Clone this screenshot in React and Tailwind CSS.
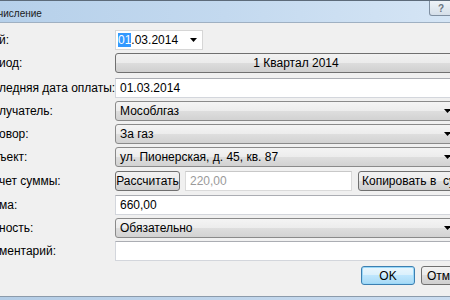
import React from "react";

const font = { fontFamily: '"Liberation Sans", Arial, sans-serif' };

function Arrow({ className = "" }) {
  return (
    <svg width="7" height="4" viewBox="0 0 7 4" className={className}>
      <path d="M0 0h7L3.5 4z" fill="#000" />
    </svg>
  );
}

function Label({ children }) {
  return (
    <div className="w-[115px] shrink-0 overflow-hidden whitespace-nowrap text-[12px] text-black">
      <span className="ml-[-1px]">{children}</span>
    </div>
  );
}

function Combo({ text }) {
  return (
    <div className="flex h-full w-[340px] shrink-0 items-center justify-between rounded-[3px] border border-[#8a8a8a] bg-[linear-gradient(to_bottom,#f4f4f4_0%,#ececec_50%,#dedede_50%,#d2d2d2_100%)] pl-[4px] pr-[3px] text-[12px]">
      <span className="whitespace-nowrap">{text}</span>
      <Arrow />
    </div>
  );
}

function TextBox({ text, className = "w-[360px]", muted }) {
  return (
    <div
      className={`flex h-full shrink-0 items-center whitespace-nowrap border border-[#d3d6dc] border-t-[#abadb3] bg-white px-[4px] text-[12px] ${className} ${
        muted ? "text-[#9a9a9a]" : "text-black"
      }`}
    >
      {text}
    </div>
  );
}

function Button({ children, className = "" }) {
  return (
    <div
      className={`flex h-full shrink-0 items-center whitespace-nowrap rounded-[3px] border border-[#707070] bg-[linear-gradient(to_bottom,#f2f2f2_0%,#ebebeb_50%,#dddddd_50%,#cfcfcf_100%)] text-[12px] ${className}`}
    >
      {children}
    </div>
  );
}

export default function App() {
  return (
    <div className="relative flex h-[300px] w-[450px] flex-col overflow-hidden bg-[#f0f0f0]" style={font}>
      {/* Title bar */}
      <div className="relative h-[22px] shrink-0 border-t border-[#5d6b7a] bg-[linear-gradient(to_right,#b6d0ea_0%,#c3d9ef_50%,#d5e5f5_100%)]">
        <span className="absolute left-[-2px] top-[5px] text-[10px] text-[#1a1a1a]">числение</span>
        <div className="absolute right-[-3px] top-0 flex h-[15px] w-[24px] items-center justify-center rounded-b-[3px] border border-t-0 border-[#7f8fa1] bg-[linear-gradient(to_bottom,#eef3f8,#d5dfe9)] text-[10px] font-bold text-[#6b7580]">
          ?
        </div>
      </div>
      <div className="h-px shrink-0 bg-[#9fb0c2]" />

      {/* Body */}
      <div className="flex flex-1 flex-col">
        <div className="mt-[7px] flex h-[20px] items-center">
          <Label>й:</Label>
          <div className="flex h-full w-[88px] items-center justify-between border border-[#d6d6d6] bg-white pl-[2px] pr-[5px] text-[12px]">
            <span>
              <span className="bg-[#3399ff] text-white">01</span>.03.2014
            </span>
            <Arrow />
          </div>
        </div>

        <div className="mt-[3px] flex h-[20px] items-center">
          <Label>иод:</Label>
          <Button className="w-[362px] justify-center">1 Квартал 2014</Button>
        </div>

        <div className="mt-[5px] flex h-[20px] items-center">
          <Label>ледняя дата оплаты:</Label>
          <TextBox text="01.03.2014" />
        </div>

        <div className="mt-[3px] flex h-[20px] items-center">
          <Label>лучатель:</Label>
          <Combo text="Мособлгаз" />
        </div>

        <div className="mt-[3px] flex h-[20px] items-center">
          <Label>овор:</Label>
          <Combo text="За газ" />
        </div>

        <div className="mt-[3px] flex h-[20px] items-center">
          <Label>ъект:</Label>
          <Combo text="ул. Пионерская, д. 45, кв. 87" />
        </div>

        <div className="mt-[4px] flex h-[20px] items-center">
          <Label>чет суммы:</Label>
          <Button className="w-[65px] justify-center">Рассчитать</Button>
          <TextBox text="220,00" className="ml-[5px] w-[167px] border-[#dadada] border-t-[#c8c8c8] bg-[#fafafa]" muted />
          <Button className="ml-[6px] w-[120px] pl-[3px]">Копировать в&nbsp;&nbsp;сумму</Button>
        </div>

        <div className="mt-[4px] flex h-[20px] items-center">
          <Label>ма:</Label>
          <TextBox text="660,00" />
        </div>

        <div className="mt-[3px] flex h-[20px] items-center">
          <Label>ность:</Label>
          <Combo text="Обязательно" />
        </div>

        <div className="mt-[3px] flex h-[20px] items-center">
          <Label>ментарий:</Label>
          <TextBox text="" />
        </div>

        <div className="mt-[5px] flex h-[19px] items-center">
          <div className="ml-[361px] flex h-full w-[54px] shrink-0 items-center justify-center rounded-[3px] border border-[#3c7fb1] bg-[linear-gradient(to_bottom,#eaf6fd_0%,#d9f0fc_50%,#bee6fd_50%,#a7d9f5_100%)] text-[12px] shadow-[inset_0_0_0_1px_#9ad8f8]">
            OK
          </div>
          <Button className="ml-[6px] w-[75px] pl-[5px]">Отмена</Button>
        </div>
      </div>

      {/* Bottom frame */}
      <div className="h-px shrink-0 bg-[#8c9bab]" />
      <div className="h-[3px] shrink-0 bg-[linear-gradient(to_right,#b4cde6,#cbddf0)]" />
    </div>
  );
}
